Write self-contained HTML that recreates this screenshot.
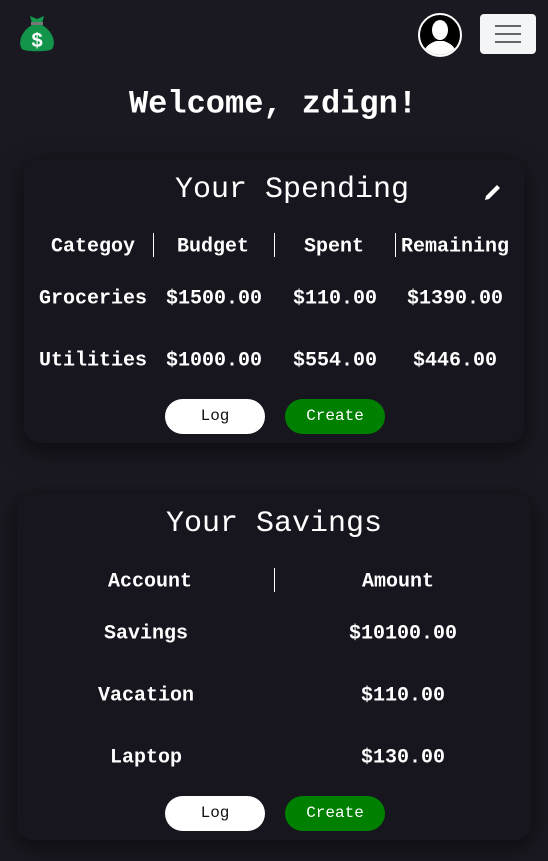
<!DOCTYPE html><html><head><style>
body{margin:0;width:548px;height:861px;background:#1a1820;font-family:"Liberation Mono",monospace;color:#fff;position:relative;overflow:hidden}
.a{position:absolute;white-space:nowrap;transform:translate(-50%,-50%);font-weight:bold;margin-top:2px}
.card{position:absolute;background:#17151e;border-radius:16px;box-shadow:0 6px 24px rgba(0,0,0,.55)}
.d{position:absolute;width:1px;background:#fff}
.btn{position:absolute;width:100px;height:35px;border-radius:18px;font-size:16px;line-height:35px;text-align:center}
.h{font-size:20px}.r{font-size:20px}
</style></head><body>
<svg style="position:absolute;left:18px;top:14px" width="38" height="40" viewBox="0 0 38 40"><path d="M12 2 L19 5 L26 2 L24 9 L14 9 Z" fill="#139a4e"/><rect x="13" y="8" width="12" height="3" fill="#777"/><path d="M14 11 C2 18 0 30 4 35 C7 38 31 38 34 35 C38 30 36 18 24 11 Z" fill="#12944b"/><text x="19" y="33" text-anchor="middle" font-family="Liberation Sans" font-weight="bold" font-size="20" fill="#fff">$</text></svg>
<svg style="position:absolute;left:417px;top:12px" width="46" height="46" viewBox="0 0 46 46"><circle cx="23" cy="23" r="21" fill="#000" stroke="#fff" stroke-width="2"/><clipPath id="c"><circle cx="23" cy="23" r="20"/></clipPath><g clip-path="url(#c)" fill="#fff"><ellipse cx="23" cy="18" rx="8" ry="10"/><path d="M6 46 C6 34 14 31 19 29 L27 29 C32 31 40 34 40 46 Z"/></g></svg>
<div style="position:absolute;left:480px;top:14px;width:56px;height:40px;background:#f4f5f7;border-radius:4px"><div style="position:absolute;left:15px;top:11px;width:26px;height:2px;background:#666"></div><div style="position:absolute;left:15px;top:19px;width:26px;height:2px;background:#666"></div><div style="position:absolute;left:15px;top:27px;width:26px;height:2px;background:#666"></div></div>
<div class="a" style="left:273px;top:102px;font-size:32px">Welcome, zdign!</div>

<div class="card" style="left:24px;top:159px;width:500px;height:284px"></div>
<div class="a" style="left:292px;top:188px;font-size:30px;font-weight:normal">Your Spending</div>
<svg style="position:absolute;left:483px;top:182px" width="20" height="20" viewBox="0 0 20 20"><path d="M2 18 L3 14 L14 3 L17 6 L6 17 Z" fill="#fff"/></svg>
<div class="a h" style="left:93px;top:245px">Categoy</div>
<div class="a h" style="left:213px;top:245px">Budget</div>
<div class="a h" style="left:334px;top:245px">Spent</div>
<div class="a h" style="left:455px;top:245px">Remaining</div>
<div class="d" style="left:153px;top:233px;height:24px"></div>
<div class="d" style="left:274px;top:233px;height:24px"></div>
<div class="d" style="left:395px;top:233px;height:24px"></div>
<div class="a r" style="left:93px;top:297px">Groceries</div>
<div class="a r" style="left:214px;top:297px">$1500.00</div>
<div class="a r" style="left:335px;top:297px">$110.00</div>
<div class="a r" style="left:455px;top:297px">$1390.00</div>
<div class="a r" style="left:93px;top:359px">Utilities</div>
<div class="a r" style="left:214px;top:359px">$1000.00</div>
<div class="a r" style="left:335px;top:359px">$554.00</div>
<div class="a r" style="left:455px;top:359px">$446.00</div>
<div class="btn" style="left:165px;top:399px;background:#fff;color:#111">Log</div>
<div class="btn" style="left:285px;top:399px;background:#008000;color:#fff">Create</div>

<div class="card" style="left:17px;top:494px;width:514px;height:346px"></div>
<div class="a" style="left:274px;top:522px;font-size:30px;font-weight:normal">Your Savings</div>
<div class="a h" style="left:150px;top:580px">Account</div>
<div class="a h" style="left:398px;top:580px">Amount</div>
<div class="d" style="left:274px;top:568px;height:24px"></div>
<div class="a r" style="left:146px;top:632px">Savings</div>
<div class="a r" style="left:403px;top:632px">$10100.00</div>
<div class="a r" style="left:146px;top:694px">Vacation</div>
<div class="a r" style="left:403px;top:694px">$110.00</div>
<div class="a r" style="left:146px;top:756px">Laptop</div>
<div class="a r" style="left:403px;top:756px">$130.00</div>
<div class="btn" style="left:165px;top:796px;background:#fff;color:#111">Log</div>
<div class="btn" style="left:285px;top:796px;background:#008000;color:#fff">Create</div>
</body></html>
